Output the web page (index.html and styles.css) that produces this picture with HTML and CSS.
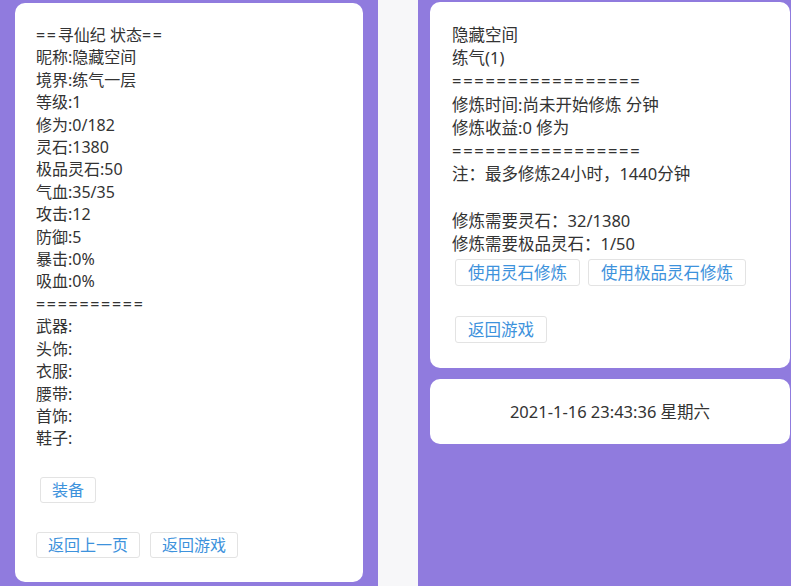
FILE: index.html
```html
<!DOCTYPE html>
<html>
<head>
  <meta charset="utf-8">
  <link rel="stylesheet" href="styles.css">
</head>
<body>

<div class="screens">
  <div class="screen screen-left">
    <div class="card status-card">
      <div class="lines">
        <div><span class="sep">==</span>寻仙纪 状态<span class="sep">==</span></div>
        <div>昵称:隐藏空间</div>
        <div>境界:练气一层</div>
        <div>等级:1</div>
        <div>修为:0/182</div>
        <div>灵石:1380</div>
        <div>极品灵石:50</div>
        <div>气血:35/35</div>
        <div>攻击:12</div>
        <div>防御:5</div>
        <div>暴击:0%</div>
        <div>吸血:0%</div>
        <div class="sep">==========</div>
        <div>武器:</div>
        <div>头饰:</div>
        <div>衣服:</div>
        <div>腰带:</div>
        <div>首饰:</div>
        <div>鞋子:</div>
      </div>
      <div class="btn-row equip-row">
        <button class="btn">装备</button>
      </div>
      <div class="btn-row nav-row">
        <button class="btn">返回上一页</button>
        <button class="btn">返回游戏</button>
      </div>
    </div>
  </div>

  <div class="divider"></div>

  <div class="screen screen-right">
    <div class="card practice-card">
      <div class="lines">
        <div>隐藏空间</div>
        <div>练气(1)</div>
        <div class="sep">=================</div>
        <div>修炼时间:尚未开始修炼 分钟</div>
        <div>修炼收益:0 修为</div>
        <div class="sep">=================</div>
        <div>注：最多修炼24小时，1440分钟</div>
        <div>&nbsp;</div>
        <div>修炼需要灵石：32/1380</div>
        <div>修炼需要极品灵石：1/50</div>
      </div>
      <div class="btn-row use-row">
        <button class="btn">使用灵石修炼</button>
        <button class="btn">使用极品灵石修炼</button>
      </div>
      <div class="btn-row back-row">
        <button class="btn">返回游戏</button>
      </div>
    </div>
    <div class="card clock-card">2021-1-16 23:43:36 星期六</div>
  </div>
</div>

</body>
</html>
```

FILE: styles.css
```css
body {
  margin: 0;
  font-family: "Noto Sans", "Noto Sans CJK SC", sans-serif;
  color: #333;
  background-color: #f7f7f9;
}
.screens {
  display: flex;
  height: 586px;
  overflow: hidden;
}
.screen {
  background-color: #907bde;
}
.screen-left {
  width: 348px;
  padding: 3px 15px 0 15px;
  font-size: 16px;
  line-height: 22.4px;
}
.divider {
  width: 40px;
  background-color: #f7f7f9;
}
.screen-right {
  flex: 1;
  padding: 2px 1px 0 12px;
  font-size: 16.5px;
  line-height: 23.2px;
}
.card {
  background-color: #fff;
  border-radius: 10px;
}
.status-card {
  padding: 21px 21px 24px 21px;
}
.practice-card {
  padding: 21px 22px 25px 22px;
}
.clock-card {
  margin-top: 11px;
  padding: 21px 0;
  text-align: center;
  line-height: 23px;
}
.sep {
  letter-spacing: 1.7px;
}
.btn-row {
  display: flex;
  gap: 10px;
}
.btn {
  font-family: inherit;
  font-size: inherit;
  color: #3d92dc;
  background-color: #fff;
  border: 1px solid #e3e3e3;
  border-radius: 3px;
  height: 26px;
  padding: 0 11px;
  line-height: 24px;
}
.equip-row {
  margin-top: 27px;
  padding-left: 4px;
}
.nav-row {
  margin-top: 29px;
}
.screen-right .btn {
  height: 27px;
  padding: 0 12px;
  line-height: 25px;
}
.use-row {
  gap: 8px;
  margin-top: 4px;
  padding-left: 3px;
}
.back-row {
  margin-top: 30px;
  padding-left: 3px;
}
```
